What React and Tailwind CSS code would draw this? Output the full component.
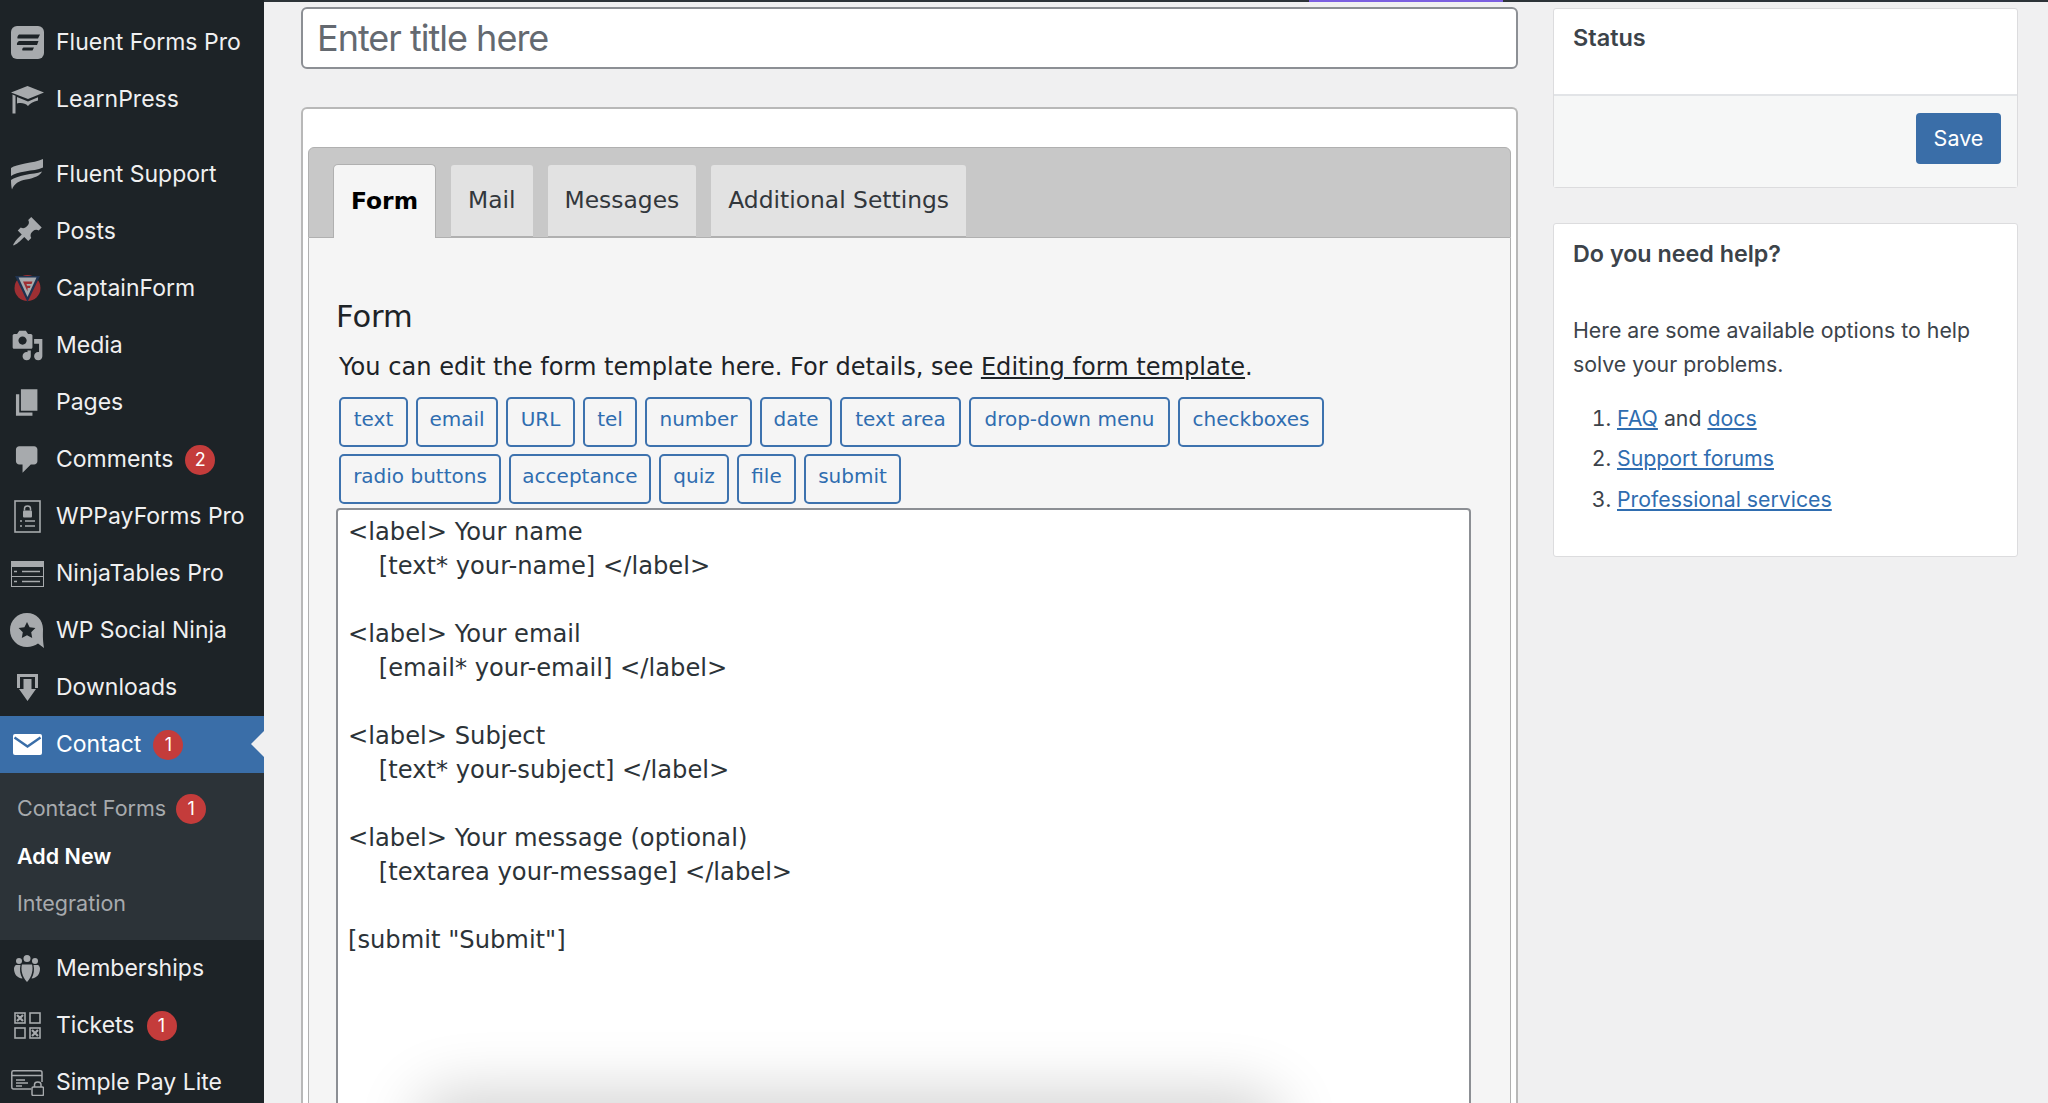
const G = "#a7aaad";

const FluentForms = () => (
  <svg width="33" height="33" viewBox="0 0 33 33">
    <rect width="33" height="33" rx="6" fill={G} />
    <path d="M8 8.5H29L27 12.5H6.5C6 11 7 9 8 8.5Z M8 15H27.5L26 19H6C5.5 17.5 6.5 15.5 8 15Z M12.5 21.5H23L21.5 24.5H11.5C10.8 23.5 11.5 22 12.5 21.5Z" fill="#1d2327" />
  </svg>
);
const LearnPress = () => (
  <svg width="33" height="28" viewBox="0 0 33 28" fill={G}>
    <path d="M16.5 0L33 6.5L17 13L0 6.5Z" />
    <path d="M1.5 8.5L4.5 9.7V27.5H1.5Z" />
    <path d="M6 11L17 15.5L27 11.3V14.5C22 15.8 19 17.5 17 20C14 17 10 16.5 6 17.5Z" />
  </svg>
);
const FluentSupport = () => (
  <svg width="33" height="31" viewBox="0 0 33 31" fill={G}>
    <path d="M0 9C3 6.5 8 6 14 4.5C21 3 27 2.5 32 0V8.5C27 11 21 11 14 12.5C8 13.5 3 14.5 0 17Z" />
    <path d="M0 21C3 18.5 8 17.5 14 16C21 14.5 26 14.5 31 12.5C29 16.5 24 19 15 20.5C8 21.5 3 25 1 30.5C0.3 28 0 24 0 21Z" />
  </svg>
);
const Posts = () => (
  <svg width="33" height="33" viewBox="0 0 20 20" fill={G}>
    <path d="M10.44 3.02l1.82-1.82 6.36 6.35-1.83 1.82c-1.05-.68-2.48-.57-3.41.36l-.75.75c-.92.93-1.04 2.35-.35 3.41l-1.83 1.82-2.41-2.41-2.8 2.79c-.42.42-3.38 2.71-3.8 2.29s1.86-3.39 2.28-3.81l2.79-2.79L4.1 9.36l1.83-1.82c1.05.69 2.48.57 3.4-.36l.75-.75c.93-.92 1.05-2.35.36-3.41z" />
  </svg>
);
const CaptainForm = () => (
  <svg width="27" height="29" viewBox="0 0 27 29">
    <circle cx="13.5" cy="14" r="13" fill="#9e2f33" />
    <path d="M1 2H26L13.5 28Z" fill="#1f3350" />
    <path d="M4.5 3.5H22.5L13.5 23Z" fill="#a7aaad" />
    <path d="M9 7.5H18.5L17.5 10H12.5L13 11.8H16.6L15.8 14H13.6L13.5 17.5Z" fill="#9e2f33" />
  </svg>
);
const Media = () => (
  <svg width="33" height="33" viewBox="0 0 20 20" fill={G}>
    <path fillRule="evenodd" d="M13 11V4c0-.55-.45-1-1-1h-1.67L9 1H5L3.67 3H2c-.55 0-1 .45-1 1v7c0 .55.45 1 1 1h10c.55 0 1-.45 1-1zM7 4.5c1.38 0 2.5 1.12 2.5 2.5S8.38 9.5 7 9.5 4.5 8.38 4.5 7 5.62 4.5 7 4.5zM14 6h5v10.5c0 1.38-1.12 2.5-2.5 2.5S14 17.88 14 16.5s1.12-2.5 2.5-2.5c.17 0 .34.02.5.05V9h-3V6zm-4 8.05V13h2v3.5c0 1.38-1.12 2.5-2.5 2.5S7 17.88 7 16.5 8.12 14 9.5 14c.17 0 .34.02.5.05z" />
  </svg>
);
const Pages = () => (
  <svg width="33" height="33" viewBox="0 0 20 20" fill={G}>
    <path d="M6 15V2h10v13H6zm-1 1h8v2H3V5h2v11z" />
  </svg>
);
const Comments = () => (
  <svg width="33" height="33" viewBox="0 0 20 20" fill={G}>
    <path d="M5 2h9c1.1 0 2 .9 2 2v7c0 1.1-.9 2-2 2h-2l-5 5v-5H5c-1.1 0-2-.9-2-2V4c0-1.1.9-2 2-2z" />
  </svg>
);
const WPPay = () => (
  <svg width="27" height="33" viewBox="0 0 27 33" fill="none" stroke={G}>
    <rect x="1" y="1" width="25" height="31" strokeWidth="1.6" />
    <rect x="9" y="10.5" width="9" height="7" rx="1" fill={G} stroke="none" />
    <path d="M10.5 10.5V8.5C10.5 5 16.5 5 16.5 8.5V10.5" strokeWidth="1.5" />
    <path d="M6 21H8M11 21H21M6 26H8M11 26H21" strokeWidth="1.6" />
  </svg>
);
const Ninja = () => (
  <svg width="33" height="26" viewBox="0 0 33 26" fill="none">
    <rect x="0" y="0" width="33" height="6" fill={G} />
    <rect x="0.5" y="0.5" width="32" height="25" stroke={G} />
    <path d="M0 15.5H33" stroke={G} />
    <path d="M3 10.5H6M3 20.5H6M11 10.5H29M11 20.5H29" stroke={G} strokeWidth="1.5" />
  </svg>
);
const Social = () => (
  <svg width="34" height="35" viewBox="0 0 34 35">
    <path d="M17 0C26.5 0 33 7 33 16C33 21 32.5 25 34 35L28 30.5C25 32.8 21 34 17 34C7.5 34 0 26.5 0 17C0 7.5 7.5 0 17 0Z" fill={G} />
    <path d="M17 9L19.6 14.3L25.4 15.1L21.2 19.2L22.2 25L17 22.3L11.8 25L12.8 19.2L8.6 15.1L14.4 14.3Z" fill="#1d2327" />
  </svg>
);
const Downloads = () => (
  <svg width="21" height="27" viewBox="0 0 21 27" fill={G}>
    <path d="M0 0H21V14H18V3H3V14H0Z" />
    <path d="M6.5 5H14.5V15H19L10.5 27L2 15H6.5Z" />
  </svg>
);
const Envelope = () => (
  <svg width="29" height="21" viewBox="0 0 29 21">
    <rect width="29" height="21" rx="2" fill="#ffffff" />
    <path d="M1.5 3.5L14.5 12.5L27.5 3.5" fill="none" stroke="#3a6ea8" strokeWidth="2.4" />
  </svg>
);
const Members = () => (
  <svg width="26" height="27" viewBox="0 0 26 27" fill={G}>
    <circle cx="13" cy="3.5" r="3.5" />
    <circle cx="5" cy="6" r="3" />
    <circle cx="21" cy="6" r="3" />
    <path d="M8 9.5H18C19.5 14 18 22 13 27C8 22 6.5 14 8 9.5Z" />
    <path d="M2 10H6.5C5.5 15 6 19 8.5 23.5C3 23 0 19 0 13.5C0 12 1 10.5 2 10Z" />
    <path d="M24 10H19.5C20.5 15 20 19 17.5 23.5C23 23 26 19 26 13.5C26 12 25 10.5 24 10Z" />
  </svg>
);
const Tickets = () => (
  <svg width="27" height="27" viewBox="0 0 27 27" fill="none" stroke={G} strokeWidth="1.6">
    <rect x="1" y="1" width="10" height="10" />
    <path d="M3 3L9 9M9 3L3 9" strokeWidth="2.2" />
    <rect x="16" y="1" width="10" height="10" />
    <rect x="1" y="16" width="10" height="10" />
    <rect x="16" y="16" width="10" height="10" />
    <path d="M18 18L24 24M24 18L18 24" strokeWidth="2.2" />
  </svg>
);
const SimplePay = () => (
  <svg width="33" height="26" viewBox="0 0 33 26" fill="none" stroke={G} strokeWidth="1.5">
    <path d="M20 19H2.5C1.5 19 0.8 18.2 0.8 17V2.5C0.8 1.5 1.5 0.8 2.5 0.8H29C30.2 0.8 31 1.5 31 2.5V12" />
    <path d="M1 5.5H31" />
    <path d="M5 10H14M5 13H17M5 16H11" strokeWidth="1.3" />
    <rect x="21" y="17" width="11.5" height="8.5" rx="1.2" />
    <path d="M23.5 17V14.5C23.5 11 30 11 30 14.5V17" />
  </svg>
);

const Badge = ({ n, cls }) => (
  <span className={"flex h-[30px] w-[30px] items-center justify-center rounded-full bg-[#c43c3b] text-[18px] text-white " + cls}>
    {n}
  </span>
);

const Item = ({ Icon, label, badge }) => (
  <div className="flex h-[57px] items-center text-[23px] text-[#f0f0f1]">
    <span className="flex w-[54px] shrink-0 items-center justify-center">
      <Icon />
    </span>
    <span className="ml-[2px]">{label}</span>
    {badge && <Badge n={badge} cls="ml-[12px]" />}
  </div>
);

const Sidebar = () => (
  <aside className="h-[1103px] w-[264px] shrink-0 overflow-hidden bg-[#1d2327] pt-[14px] font-['Inter',sans-serif]">
    <Item Icon={FluentForms} label="Fluent Forms Pro" />
    <Item Icon={LearnPress} label="LearnPress" />
    <div className="h-[18px]" />
    <Item Icon={FluentSupport} label="Fluent Support" />
    <Item Icon={Posts} label="Posts" />
    <Item Icon={CaptainForm} label="CaptainForm" />
    <Item Icon={Media} label="Media" />
    <Item Icon={Pages} label="Pages" />
    <Item Icon={Comments} label="Comments" badge="2" />
    <Item Icon={WPPay} label="WPPayForms Pro" />
    <Item Icon={Ninja} label="NinjaTables Pro" />
    <Item Icon={Social} label="WP Social Ninja" />
    <Item Icon={Downloads} label="Downloads" />
    <div className="relative flex h-[57px] items-center bg-[#3a6ea8] text-[23px] text-white">
      <span className="flex w-[54px] shrink-0 items-center justify-center">
        <Envelope />
      </span>
      <span className="ml-[2px]">Contact</span>
      <Badge n="1" cls="ml-[12px]" />
      <span className="absolute right-0 top-[15px] h-0 w-0 border-y-[13px] border-r-[13px] border-y-transparent border-r-[#f0f0f1]" />
    </div>
    <div className="h-[167px] bg-[#2c3338] pt-[12px] text-[21.5px] text-[#a7aaad]">
      <div className="flex h-[47px] items-center pl-[17px]">
        <span>Contact Forms</span>
        <Badge n="1" cls="ml-[10px]" />
      </div>
      <div className="flex h-[48px] items-center pl-[17px] font-semibold text-white">Add New</div>
      <div className="flex h-[47px] items-center pl-[17px]">Integration</div>
    </div>
    <Item Icon={Members} label="Memberships" />
    <Item Icon={Tickets} label="Tickets" badge="1" />
    <Item Icon={SimplePay} label="Simple Pay Lite" />
  </aside>
);

const row1 = [
  ["text", "w-[69px]"],
  ["email", "w-[82px]"],
  ["URL", "w-[69px]"],
  ["tel", "w-[54px]"],
  ["number", "w-[107px]"],
  ["date", "w-[72px]"],
  ["text area", "w-[121px]"],
  ["drop-down menu", "w-[201px]"],
  ["checkboxes", "w-[146px]"],
];
const row2 = [
  ["radio buttons", "w-[162px]"],
  ["acceptance", "w-[142px]"],
  ["quiz", "w-[70px]"],
  ["file", "w-[59px]"],
  ["submit", "w-[97px]"],
];

const TagButton = ({ t, w }) => (
  <span className={"flex h-[50px] items-center justify-center whitespace-nowrap rounded-[5px] border-2 border-[#3d72ae] pb-[7px] text-[20px] text-[#2f6db0] " + w}>
    {t}
  </span>
);

const template = `<label> Your name
    [text* your-name] </label>

<label> Your email
    [email* your-email] </label>

<label> Subject
    [text* your-subject] </label>

<label> Your message (optional)
    [textarea your-message] </label>

[submit "Submit"]`;

const Tab = ({ t, active }) =>
  active ? (
    <div className="-mb-px flex h-[74px] items-center rounded-t-[5px] border border-b-0 border-[#b0b0b0] bg-[#f5f5f5] px-[17px] font-bold text-black">
      {t}
    </div>
  ) : (
    <div className="flex h-[72px] items-center rounded-t-[3px] border-b border-[#b0b0b0] bg-[#e2e2e2] px-[17px] text-[#32373c]">
      {t}
    </div>
  );

const Main = () => (
  <main className="relative min-w-0 flex-1 font-['DejaVu_Sans',sans-serif]">
    <div className="flex h-[2px] bg-[#2c3338]">
      <div className="ml-[1045px] h-[2px] w-[194px] bg-[#7b5fe0]" />
    </div>
    <div className="flex pl-[37px] pt-[5px]">
      <div className="w-[1217px] shrink-0">
        <div className="flex h-[62px] items-center rounded-[6px] border-2 border-[#8c8f94] bg-white pl-[14px] font-['Inter',sans-serif] text-[36px] tracking-[-1px] text-[#646970]">
          Enter title here
        </div>
        <div className="mt-[38px] rounded-t-[6px] border-2 border-b-0 border-[#b8b8b8] bg-white px-[5px] pt-[38px]">
          <div className="flex h-[91px] items-end gap-x-[15px] rounded-t-[6px] border border-[#b0b0b0] bg-[#c8c8c8] pl-[24px] text-[23.4px]">
            <Tab t="Form" active />
            <Tab t="Mail" />
            <Tab t="Messages" />
            <Tab t="Additional Settings" />
          </div>
          <div className="h-[900px] border-x border-[#b0b0b0] bg-[#f5f5f5] pl-[27px]">
            <h2 className="pt-[60px] text-[30.5px] leading-[38px] text-[#1d2327]">Form</h2>
            <p className="ml-[3px] mt-[14px] text-[24.1px] leading-[34px] text-[#1d2327]">
              You can edit the form template here. For details, see{" "}
              <a className="underline">Editing form template</a>.
            </p>
            <div className="ml-[3px] mt-[13px] w-[1130px]">
              <div className="flex gap-x-[8px]">
                {row1.map(([t, w]) => (
                  <TagButton key={t} t={t} w={w} />
                ))}
              </div>
              <div className="mt-[7px] flex gap-x-[8px]">
                {row2.map(([t, w]) => (
                  <TagButton key={t} t={t} w={w} />
                ))}
              </div>
            </div>
            <div className="mt-[4px] h-[700px] w-[1135px] whitespace-pre rounded-[4px] border-2 border-[#8c8f94] bg-white pl-[10px] pt-[5px] text-[24.2px] leading-[34px] text-[#2c3338]">
              {template}
            </div>
          </div>
        </div>
      </div>
      <div className="ml-[35px] w-[465px] shrink-0 pt-[1px] font-['Inter',sans-serif] text-[#3c434a]">
        <section className="h-[180px] rounded-[3px] border border-[#dcdcde] bg-white">
          <h3 className="flex h-[87px] border-b-2 border-[#e2e4e7] pl-[19px] pt-[15px] text-[23.5px] font-semibold leading-[28px]">Status</h3>
          <div className="flex h-[91px] justify-end bg-[#f6f7f7] pr-[16px] pt-[17px]">
            <button className="h-[51px] w-[85px] rounded-[4px] bg-[#3a6ea8] text-[21.5px] text-white">Save</button>
          </div>
        </section>
        <section className="mt-[35px] h-[334px] rounded-[3px] border border-[#dcdcde] bg-white pl-[19px] pt-[16px] text-[21.3px]">
          <h3 className="text-[23.3px] font-semibold leading-[28px]">Do you need help?</h3>
          <p className="mt-[46px] leading-[33.5px]">
            Here are some available options to help
            <br />
            solve your problems.
          </p>
          <ol className="mt-[20px] list-decimal pl-[44px] leading-[34px]">
            <li className="mb-[5.5px]">
              <a className="text-[#2f6db0] underline">FAQ</a> and <a className="text-[#2f6db0] underline">docs</a>
            </li>
            <li className="mb-[7.5px]">
              <a className="text-[#2f6db0] underline">Support forums</a>
            </li>
            <li>
              <a className="text-[#2f6db0] underline">Professional services</a>
            </li>
          </ol>
        </section>
      </div>
    </div>
    <div className="absolute left-[170px] top-[1110px] h-[40px] w-[830px] rounded-[40px] shadow-[0_0_60px_20px_rgba(0,0,0,0.17)]" />
  </main>
);

export default function App() {
  return (
    <div className="flex h-[1103px] w-[2048px] overflow-hidden bg-[#f0f0f1]">
      <Sidebar />
      <Main />
    </div>
  );
}
